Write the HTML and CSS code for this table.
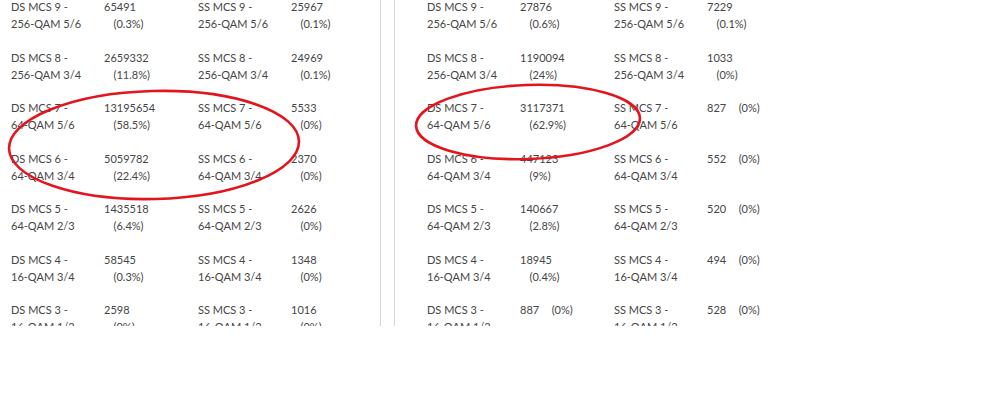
FILE: index.html
```html
<!DOCTYPE html>
<html>
<head>
<meta charset="utf-8">
<link rel="stylesheet" href="styles.css">
</head>
<body>
<div class="page">
  <section class="panel panel-left">
    <div class="rows">
      <div class="row"><div class="lbl">DS MCS 9 -<br>256-QAM 5/6</div><div class="num">65491<span class="pct wrap">(0.3%)</span></div><div class="lbl">SS MCS 9 -<br>256-QAM 5/6</div><div class="num">25967<span class="pct wrap">(0.1%)</span></div></div>
      <div class="row"><div class="lbl">DS MCS 8 -<br>256-QAM 3/4</div><div class="num">2659332<span class="pct wrap">(11.8%)</span></div><div class="lbl">SS MCS 8 -<br>256-QAM 3/4</div><div class="num">24969<span class="pct wrap">(0.1%)</span></div></div>
      <div class="row"><div class="lbl">DS MCS 7 -<br>64-QAM 5/6</div><div class="num">13195654<span class="pct wrap">(58.5%)</span></div><div class="lbl">SS MCS 7 -<br>64-QAM 5/6</div><div class="num">5533<span class="pct wrap">(0%)</span></div></div>
      <div class="row"><div class="lbl">DS MCS 6 -<br>64-QAM 3/4</div><div class="num">5059782<span class="pct wrap">(22.4%)</span></div><div class="lbl">SS MCS 6 -<br>64-QAM 3/4</div><div class="num">2370<span class="pct wrap">(0%)</span></div></div>
      <div class="row"><div class="lbl">DS MCS 5 -<br>64-QAM 2/3</div><div class="num">1435518<span class="pct wrap">(6.4%)</span></div><div class="lbl">SS MCS 5 -<br>64-QAM 2/3</div><div class="num">2626<span class="pct wrap">(0%)</span></div></div>
      <div class="row"><div class="lbl">DS MCS 4 -<br>16-QAM 3/4</div><div class="num">58545<span class="pct wrap">(0.3%)</span></div><div class="lbl">SS MCS 4 -<br>16-QAM 3/4</div><div class="num">1348<span class="pct wrap">(0%)</span></div></div>
      <div class="row"><div class="lbl">DS MCS 3 -<br>16-QAM 1/2</div><div class="num">2598<span class="pct wrap">(0%)</span></div><div class="lbl">SS MCS 3 -<br>16-QAM 1/2</div><div class="num">1016<span class="pct wrap">(0%)</span></div></div>
    </div>
  </section>
  <div class="divider-gap"></div>
  <section class="panel panel-right">
    <div class="rows">
      <div class="row"><div class="lbl">DS MCS 9 -<br>256-QAM 5/6</div><div class="num">27876<span class="pct wrap">(0.6%)</span></div><div class="lbl">SS MCS 9 -<br>256-QAM 5/6</div><div class="num">7229<span class="pct wrap">(0.1%)</span></div></div>
      <div class="row"><div class="lbl">DS MCS 8 -<br>256-QAM 3/4</div><div class="num">1190094<span class="pct wrap">(24%)</span></div><div class="lbl">SS MCS 8 -<br>256-QAM 3/4</div><div class="num">1033<span class="pct wrap">(0%)</span></div></div>
      <div class="row"><div class="lbl">DS MCS 7 -<br>64-QAM 5/6</div><div class="num">3117371<span class="pct wrap">(62.9%)</span></div><div class="lbl">SS MCS 7 -<br>64-QAM 5/6</div><div class="num">827<span class="pct inline">(0%)</span></div></div>
      <div class="row"><div class="lbl">DS MCS 6 -<br>64-QAM 3/4</div><div class="num">447123<span class="pct wrap">(9%)</span></div><div class="lbl">SS MCS 6 -<br>64-QAM 3/4</div><div class="num">552<span class="pct inline">(0%)</span></div></div>
      <div class="row"><div class="lbl">DS MCS 5 -<br>64-QAM 2/3</div><div class="num">140667<span class="pct wrap">(2.8%)</span></div><div class="lbl">SS MCS 5 -<br>64-QAM 2/3</div><div class="num">520<span class="pct inline">(0%)</span></div></div>
      <div class="row"><div class="lbl">DS MCS 4 -<br>16-QAM 3/4</div><div class="num">18945<span class="pct wrap">(0.4%)</span></div><div class="lbl">SS MCS 4 -<br>16-QAM 3/4</div><div class="num">494<span class="pct inline">(0%)</span></div></div>
      <div class="row"><div class="lbl">DS MCS 3 -<br>16-QAM 1/2</div><div class="num">887<span class="pct inline">(0%)</span></div><div class="lbl">SS MCS 3 -<br>16-QAM 1/2</div><div class="num">528<span class="pct inline">(0%)</span></div></div>
    </div>
  </section>
</div>
<svg class="marks" width="1000" height="394" viewBox="0 0 1000 394">
  <ellipse cx="154" cy="145" rx="145" ry="54" transform="rotate(-1.5 154 145)"/>
  <ellipse cx="528" cy="122" rx="112" ry="37" transform="rotate(-2 528 122)"/>
</svg>
</body>
</html>
```

FILE: styles.css
```css
html, body {
  margin: 0;
  padding: 0;
  background: #ffffff;
}
body {
  width: 1000px;
  height: 394px;
  position: relative;
  overflow: hidden;
  font-family: "Lato", "Liberation Sans", sans-serif;
  font-size: 11px;
  line-height: 17px;
  color: #454545;
}
.page {
  display: flex;
  height: 326px;
  overflow: hidden;
}
.panel {
  height: 326px;
}
.panel-left {
  width: 369px;
  padding-left: 11px;
  border-right: 1px solid #d6d6d6;
}
.divider-gap {
  width: 13px;
}
.panel-right {
  padding-left: 32px;
  border-left: 1px solid #d6d6d6;
}
.rows {
  display: flex;
  flex-direction: column;
  gap: 16.5px;
  margin-top: -2px;
}
.row {
  display: grid;
  grid-template-columns: 93px 94px 93px 80px;
  height: 34px;
}
.lbl, .num {
  white-space: nowrap;
}
.pct.wrap {
  display: block;
  padding-left: 9.5px;
}
.pct.inline {
  margin-left: 12.5px;
}
.marks {
  position: absolute;
  left: 0;
  top: 0;
  pointer-events: none;
}
.marks ellipse {
  fill: none;
  stroke: #e3141b;
  stroke-width: 2.6;
}
```
